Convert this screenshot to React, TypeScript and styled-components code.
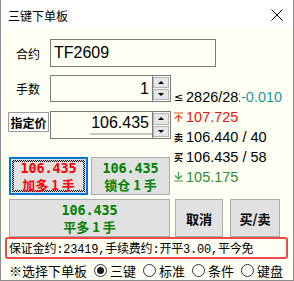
import styled, { createGlobalStyle, css } from "styled-components";

const GlobalStyle = createGlobalStyle`
  html, body {
    margin: 0;
    padding: 0;
    background: #fff;
  }
  body {
    width: 294px;
    height: 281px;
    overflow: hidden;
  }
`;

const Window = styled.div`
  box-sizing: border-box;
  width: 294px;
  height: 281px;
  border: 1px solid #8c8c8c;
  border-top: none;
  display: flex;
  flex-direction: column;
  background: #fffff4;
  font-family: "Noto Sans CJK SC", sans-serif;
  color: #000;
  overflow: hidden;
`;

const TitleBar = styled.div`
  height: 30px;
  flex: none;
  background: #fff;
  display: flex;
  align-items: center;
  justify-content: space-between;
  padding: 0 10px 0 7px;
  font-size: 12px;
`;

const Body = styled.div`
  flex: 1;
  padding: 9px 0 0 7px;
  display: flex;
  flex-direction: column;
`;

const FormRow = styled.div<{ $gap?: number }>`
  display: flex;
  align-items: center;
  margin-top: ${(p) => p.$gap ?? 0}px;
`;

const Label = styled.div`
  width: 42px;
  box-sizing: border-box;
  padding-left: 8px;
  font-size: 12px;
  flex: none;
`;

const TextBox = styled.div<{ $width: number; $height: number; $right?: boolean }>`
  box-sizing: border-box;
  width: ${(p) => p.$width}px;
  height: ${(p) => p.$height}px;
  border: 1px solid #7a7a7a;
  background: #fffff4;
  display: flex;
  align-items: center;
  justify-content: ${(p) => (p.$right ? "flex-end" : "flex-start")};
  padding: ${(p) => (p.$right ? "0 3px 0 0" : "0 0 0 3px")};
  font-family: "Liberation Sans", Arial, sans-serif;
  font-size: 16px;
  flex: none;
`;

const PriceBox = styled(TextBox)`
  align-items: flex-end;
  padding: 0 0 3px 0;
`;

const PriceValue = styled.span`
  padding-right: 3px;
  padding-left: 1px;
  line-height: 20px;
  border-bottom: 2px solid #c6c6c6;
`;

const Spinner = styled.div<{ $height: number }>`
  box-sizing: border-box;
  width: 18px;
  height: ${(p) => p.$height}px;
  border: 1px solid #7a7a7a;
  border-left: none;
  display: flex;
  flex-direction: column;
  gap: 1px;
  padding: 1px 1px 1px 0;
  flex: none;
`;

const SpinButton = styled.div<{ $down?: boolean }>`
  flex: 1;
  background: #e6e6e6;
  border: 1px solid #b4b4b4;
  display: flex;
  align-items: center;
  justify-content: center;
  &::after {
    content: "";
    width: 0;
    height: 0;
    border-left: 3px solid transparent;
    border-right: 3px solid transparent;
    ${(p) =>
      p.$down
        ? css`border-top: 3px solid #000;`
        : css`border-bottom: 3px solid #000;`}
  }
`;

const ModeButton = styled.div`
  box-sizing: border-box;
  width: 41px;
  height: 20px;
  margin-right: 1px;
  align-self: flex-start;
  margin-top: 1px;
  border: 1px solid #9c9c9c;
  background: #fff;
  font-size: 12px;
  font-weight: bold;
  display: flex;
  align-items: center;
  justify-content: center;
  flex: none;
`;

const Middle = styled.div`
  display: flex;
  margin-top: 8px;
`;

const LeftColumn = styled.div`
  width: 163px;
  display: flex;
  flex-direction: column;
  flex: none;
`;

const InfoColumn = styled.div`
  margin-left: 3px;
  padding-top: 12px;
  display: flex;
  flex-direction: column;
  font-family: "Liberation Sans", Arial, sans-serif;
  font-size: 14.5px;
`;

const InfoLine = styled.div<{ $color?: string }>`
  height: 20px;
  display: flex;
  align-items: center;
  gap: 3px;
  white-space: nowrap;
  color: ${(p) => p.$color ?? "#000"};
`;

const InfoIcon = styled.span<{ $plain?: boolean }>`
  width: 9px;
  display: inline-flex;
  justify-content: center;
  align-items: center;
  font-family: ${(p) => (p.$plain ? '"DejaVu Sans", sans-serif' : '"Noto Sans CJK SC", sans-serif')};
  font-size: ${(p) => (p.$plain ? "11px" : "9px")};
  font-weight: ${(p) => (p.$plain ? "normal" : "bold")};
  color: #000;
  flex: none;
`;

// the last-traded column is too narrow in the original, so the figure is cut
const Clipped = styled.span`
  display: inline-block;
  width: 54px;
  overflow: hidden;
  flex: none;
`;

const Change = styled.span`
  color: #179c9c;
  margin-left: -2px;
`;

const ButtonRow = styled.div<{ $gap: number }>`
  display: flex;
  gap: 3px;
  padding-left: 1px;
  margin-top: ${(p) => p.$gap}px;
`;

const OrderButton = styled.div<{ $tone: "red" | "green"; $width: number; $focused?: boolean }>`
  box-sizing: border-box;
  position: relative;
  width: ${(p) => p.$width}px;
  height: 38px;
  background: #e1e1e1;
  border: ${(p) => (p.$focused ? "2px solid #0078d7" : "1px solid #adadad")};
  color: ${(p) => (p.$tone === "red" ? "#ff0000" : "#008000")};
  display: flex;
  flex-direction: column;
  align-items: center;
  justify-content: center;
  font-weight: bold;
  flex: none;
  ${(p) =>
    p.$focused &&
    css`
      &::before {
        content: "";
        position: absolute;
        inset: 1px;
        background: repeating-conic-gradient(#000 0 25%, #e1e1e1 0 50%) 0 0 / 2px 2px;
      }
      &::after {
        content: "";
        position: absolute;
        inset: 3px;
        background: #e1e1e1;
      }
    `}
`;

const PriceLine = styled.span`
  position: relative;
  z-index: 1;
  font-family: "DejaVu Sans Mono", monospace;
  font-size: 13.5px;
  line-height: 16px;
  letter-spacing: -0.1px;
`;

const ActionLine = styled.span`
  position: relative;
  z-index: 1;
  font-size: 13px;
  line-height: 17px;
`;

const BottomRow = styled.div`
  display: flex;
  padding-left: 1px;
  margin-top: 4px;
`;

const PlainButton = styled.div<{ $width: number; $gap: number }>`
  box-sizing: border-box;
  width: ${(p) => p.$width}px;
  height: 38px;
  margin-left: ${(p) => p.$gap}px;
  background: #e1e1e1;
  border: 1px solid #adadad;
  display: flex;
  align-items: center;
  justify-content: center;
  font-size: 13px;
  font-weight: bold;
  flex: none;
`;

const Notice = styled.div`
  box-sizing: border-box;
  width: 283px;
  height: 22px;
  margin-left: -3px;
  border: 2px solid #f04848;
  border-radius: 3px;
  padding-left: 2px;
  display: flex;
  align-items: center;
  font-family: "Liberation Mono", "Noto Sans CJK SC", monospace;
  font-size: 12px;
  white-space: nowrap;
  letter-spacing: -0.2px;
`;

const PanelRow = styled.div`
  height: 20px;
  margin-top: 1px;
  padding-left: 1px;
  display: flex;
  align-items: center;
  font-size: 13px;
  white-space: nowrap;
`;

const PanelOption = styled.div`
  display: flex;
  align-items: center;
  gap: 3px;
  margin-left: 7px;
`;

const Radio = styled.span<{ $checked?: boolean }>`
  box-sizing: border-box;
  width: 13px;
  height: 13px;
  border: 1px solid #333;
  border-radius: 50%;
  background: #fff;
  display: inline-flex;
  align-items: center;
  justify-content: center;
  &::after {
    content: "";
    width: 7px;
    height: 7px;
    border-radius: 50%;
    background: ${(p) => (p.$checked ? "#1a1a1a" : "transparent")};
  }
`;

function CloseIcon() {
  return (
    <svg width="12" height="12" viewBox="0 0 12 12">
      <path d="M0.5 0.5 L11.5 11.5 M11.5 0.5 L0.5 11.5" stroke="#000" strokeWidth="1" />
    </svg>
  );
}

function LimitIcon({ up }: { up: boolean }) {
  const color = up ? "#e8502a" : "#3a9a3a";
  return (
    <svg width="9" height="10" viewBox="0 0 9 10">
      {up ? (
        <path d="M0 1 H9 M1 6.5 L4.5 3 L8 6.5 M4.5 3 V10" stroke={color} strokeWidth="1.2" fill="none" />
      ) : (
        <path d="M0 9 H9 M1 3.5 L4.5 7 L8 3.5 M4.5 7 V0" stroke={color} strokeWidth="1.2" fill="none" />
      )}
    </svg>
  );
}

function App() {
  const panels = [
    { name: "三键", checked: true },
    { name: "标准" },
    { name: "条件" },
    { name: "键盘" },
  ];

  return (
    <>
      <GlobalStyle />
      <Window>
        <TitleBar>
          <span>三键下单板</span>
          <CloseIcon />
        </TitleBar>
        <Body>
          <FormRow>
            <Label>合约</Label>
            <TextBox $width={166} $height={28}>TF2609</TextBox>
          </FormRow>

          <Middle>
            <LeftColumn>
              <FormRow>
                <Label>手数</Label>
                <TextBox $width={103} $height={27} $right>1</TextBox>
                <Spinner $height={27}>
                  <SpinButton />
                  <SpinButton $down />
                </Spinner>
              </FormRow>
              <FormRow $gap={9}>
                <ModeButton>指定价</ModeButton>
                <PriceBox $width={103} $height={28} $right>
                  <PriceValue>106.435</PriceValue>
                </PriceBox>
                <Spinner $height={28}>
                  <SpinButton />
                  <SpinButton $down />
                </Spinner>
              </FormRow>
              <ButtonRow $gap={18}>
                <OrderButton $tone="red" $width={79} $focused>
                  <PriceLine>106.435</PriceLine>
                  <ActionLine>加多 1 手</ActionLine>
                </OrderButton>
                <OrderButton $tone="green" $width={79}>
                  <PriceLine>106.435</PriceLine>
                  <ActionLine>锁仓 1 手</ActionLine>
                </OrderButton>
              </ButtonRow>
            </LeftColumn>

            <InfoColumn>
              <InfoLine>
                <InfoIcon $plain>≤</InfoIcon>
                <Clipped>2826/2826</Clipped>
                <Change>-0.010</Change>
              </InfoLine>
              <InfoLine $color="#ee1111">
                <InfoIcon>
                  <LimitIcon up />
                </InfoIcon>
                107.725
              </InfoLine>
              <InfoLine>
                <InfoIcon>卖</InfoIcon>
                106.440 / 40
              </InfoLine>
              <InfoLine>
                <InfoIcon>买</InfoIcon>
                106.435 / 58
              </InfoLine>
              <InfoLine $color="#2e8b2e">
                <InfoIcon>
                  <LimitIcon up={false} />
                </InfoIcon>
                105.175
              </InfoLine>
            </InfoColumn>
          </Middle>

          <BottomRow>
            <OrderButton $tone="green" $width={161}>
              <PriceLine>106.435</PriceLine>
              <ActionLine>平多 1 手</ActionLine>
            </OrderButton>
            <PlainButton $width={48} $gap={5}>取消</PlainButton>
            <PlainButton $width={50} $gap={7}>买/卖</PlainButton>
          </BottomRow>

          <Notice>保证金约:23419,手续费约:开平3.00,平今免</Notice>

          <PanelRow>
            <span>※选择下单板</span>
            {panels.map((p) => (
              <PanelOption key={p.name}>
                <Radio $checked={p.checked} />
                <span>{p.name}</span>
              </PanelOption>
            ))}
          </PanelRow>
        </Body>
      </Window>
    </>
  );
}

export default App;
